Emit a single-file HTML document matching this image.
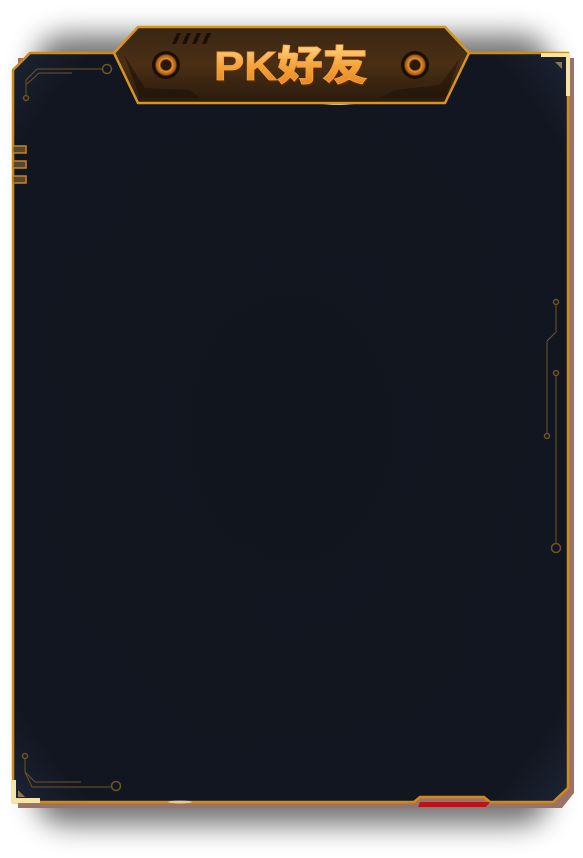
<!DOCTYPE html>
<html><head><meta charset="utf-8"><style>
html,body{margin:0;padding:0;background:#fff;width:583px;height:858px;overflow:hidden}
svg{display:block}
</style></head><body>
<svg width="583" height="858" viewBox="0 0 583 858" xmlns="http://www.w3.org/2000/svg">
<defs>
<filter id="blur" x="-20%" y="-20%" width="140%" height="140%"><feGaussianBlur stdDeviation="14"/></filter>
<radialGradient id="bg" cx="50%" cy="50%" r="72%">
<stop offset="0" stop-color="#11151e"/><stop offset="0.85" stop-color="#121620"/><stop offset="1" stop-color="#1d2638"/></radialGradient>
<linearGradient id="plate" x1="0" y1="0" x2="0" y2="1">
<stop offset="0" stop-color="#3a2614"/><stop offset="0.5" stop-color="#4a2f15"/><stop offset="1" stop-color="#2a1a0c"/></linearGradient>
<linearGradient id="txt" x1="0" y1="0" x2="0" y2="1">
<stop offset="0" stop-color="#ffd88a"/><stop offset="0.5" stop-color="#f5a33a"/><stop offset="1" stop-color="#e8801c"/></linearGradient>
<radialGradient id="bolt"><stop offset="0" stop-color="#2a1808"/><stop offset="0.35" stop-color="#2a1808"/><stop offset="0.45" stop-color="#e8902a"/><stop offset="0.7" stop-color="#a85a14"/><stop offset="0.8" stop-color="#1a0f06"/><stop offset="1" stop-color="#1a0f06"/></radialGradient>
</defs>
<rect x="35" y="35" width="515" height="790" rx="30" fill="#000" opacity="0.55" filter="url(#blur)"/>
<path d="M18 58 L574 58 L574 793 L562 808 L34 808 L18 808 Z" fill="#9a7268"/>
<path d="M30 53 L568 53 L568 788 L553 802 L490 802 L484 797 L420 797 L414 802 L13 802 L13 70 Z" fill="url(#bg)" stroke="#d08a18" stroke-width="2.5"/>
<path d="M420 802 L490 802 L486 807 L418 807 Z" fill="#b8141a"/>
<path d="M541 53 L570 53 L570 96 L566 96 L566 57 L541 57 Z" fill="#f6e3a6"/>
<path d="M555 62 L562 62 L562 69 Z" fill="#8c7a55"/>
<path d="M12 780 L16 780 L16 798 L40 798 L40 803 L12 803 Z" fill="#f6e3a6"/>
<path d="M18 790 L18 797 L25 797 Z" fill="#8c7a55"/>
<g fill="#5a4434" stroke="#c6861a" stroke-width="1.5">
<rect x="13" y="146" width="13" height="7"/><rect x="13" y="161" width="13" height="7"/><rect x="13" y="176" width="13" height="7"/></g>
<g fill="none" stroke="#6e5424" stroke-width="1">
<path d="M26 95 L26 80 L37 69 L102 69"/><path d="M27 84 L39 73 L72 73"/>
<circle cx="107" cy="69" r="4.5" stroke-width="1.5"/><circle cx="26" cy="98" r="2.5" stroke-width="1.5"/>
<path d="M25 759 L25 772 L35 782 L81 782"/><path d="M25 772 L32 787 L112 787"/>
<circle cx="25" cy="756" r="2.5" stroke-width="1.5"/><circle cx="116" cy="786" r="4.5" stroke-width="1.5"/>
<path d="M556 305 L556 332 L547 341 L547 433"/><circle cx="556" cy="302" r="2.5" stroke-width="1.5"/><circle cx="547" cy="436" r="2.5" stroke-width="1.5"/>
<path d="M556 376 L556 544"/><circle cx="556" cy="373" r="2.5" stroke-width="1.5"/><circle cx="556" cy="548" r="4.5" stroke-width="1.5"/>
</g>
<ellipse cx="180" cy="802" rx="12" ry="1.5" fill="#fff6d0" opacity="0.6"/>
<ellipse cx="338" cy="103" rx="18" ry="2" fill="#fff6d0" opacity="0.8"/>
<path d="M138 27 L445 27 L469 53 L445 103 L138 103 L114 53 Z" fill="url(#plate)" stroke="#d69420" stroke-width="2.5"/>
<path d="M124 55 L140 98 L200 98 L190 90 L145 88 Z" fill="#1e1208" opacity="0.6"/>
<path d="M460 58 L445 98 L380 98 L395 90 L440 85 Z" fill="#1e1208" opacity="0.5"/>
<g fill="#1a0f06"><path d="M172 44 L176 44 L181 33 L177 33Z"/><path d="M182 44 L186 44 L191 33 L187 33Z"/><path d="M192 44 L196 44 L201 33 L197 33Z"/><path d="M202 44 L206 44 L211 33 L207 33Z"/></g>
<circle cx="166" cy="65" r="14" fill="url(#bolt)"/>
<circle cx="415" cy="65" r="14" fill="url(#bolt)"/>
<g font-family="'Liberation Sans','Noto Sans CJK SC',sans-serif" font-weight="900" font-size="41" text-anchor="middle">
<text x="291" y="80" fill="#5a2a0a" dy="2" dx="1" textLength="154" lengthAdjust="spacingAndGlyphs">PK好友</text>
<text x="291" y="80" fill="url(#txt)" stroke="#f0a040" stroke-width="0.8" textLength="154" lengthAdjust="spacingAndGlyphs">PK好友</text>
</g>
</svg>
</body></html>
